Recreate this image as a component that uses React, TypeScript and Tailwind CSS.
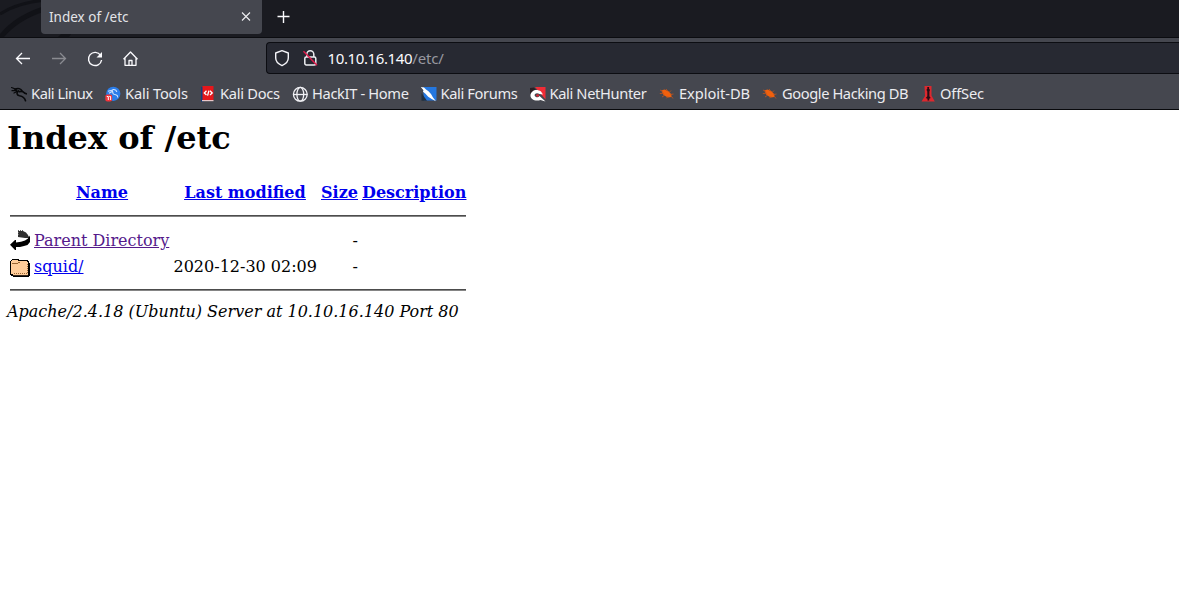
import React from "react";

const Dragon = () => (
  <svg width="16" height="16" viewBox="0 0 16 16" fill="none" stroke="#08090b" strokeLinecap="round">
    <path d="M.5 1.500 5 3.300M1 4.600 6 4.300M3 7 6 5.500" strokeWidth="1.200" />
    <path d="M4 3.200c3-1.200 6-.6 7 1.600" strokeWidth="1.600" />
    <path d="M7.500 4.800c-2.600 1.800-1.600 4.400 1 5 2.500.5 5 1.300 6 5" strokeWidth="1.600" />
    <path d="M8.200 5.700c2-.6 4-.3 5.300 1.300l1.800.8" strokeWidth="1.600" />
  </svg>
);

const Tools = () => (
  <svg width="16" height="16" viewBox="0 0 16 16" fill="none">
    <circle cx="8.300" cy="7.800" r="7.100" fill="#2b7de9" />
    <path d="M3 5.200 8 4M4 7.300 8 5M7.500 3.600c2.800-.4 4 1 4.300 2.400M8 5.500c-1 2.400 1 2.800 2.800 3.200s2 1.500 2 2.800" stroke="#cfe3ff" strokeWidth="1.100" />
    <rect x="0.300" y="8.500" width="6.800" height="7" rx="2" fill="#f3343b" />
    <path d="M1.800 10.500h1.500v3.500M4.300 10.500h1.300v3.500" stroke="#fff" />
  </svg>
);

const Docs = () => (
  <svg width="16" height="16" viewBox="0 0 16 16" fill="none">
    <path d="M1 1h3v14.500H1z" fill="#123e80" />
    <path d="M2.500 0H13.500v14H2.500z" fill="#e5171b" />
    <path d="M2 14h11.500v1.200H2z" fill="#e9c6c8" />
    <path d="M6.500 4.800 4.300 7l2.200 2m3.500-4.200L12.200 7 10 9M8.900 4.600l-1.300 5" stroke="#fff" strokeWidth="1.300" />
  </svg>
);

const Globe = () => (
  <svg width="16" height="16" viewBox="0 0 16 16" fill="none" stroke="#f1f1f5" strokeWidth="1.300">
    <circle cx="8.300" cy="8.300" r="6.900" />
    <ellipse cx="8.300" cy="8.300" rx="3.400" ry="6.900" />
    <path d="M1.600 8.500h13.800" />
  </svg>
);

const Forums = () => (
  <svg width="16" height="16" viewBox="0 0 16 16">
    <path d="M2 1h13.500v13.500H3z" fill="#2477df" />
    <path d="M.5 7 6 14.800H.5z" fill="#22303f" />
    <path d="m-.5 .8 3.500.7 2 2 2.500 1.700L10 8l2 3.500 3 3.800-4.300-2.200-3.500-2.300L4.500 7.700 2 5.800l.5-1.600z" fill="#fff" />
  </svg>
);

const NetHunter = () => (
  <svg width="16" height="16" viewBox="0 0 16 16">
    <path d="M5 1h10.500v12.500z" fill="#f12c36" />
    <path d="M0 2 4 1.500 6 4 0 8z" fill="#2b2024" />
    <path d="M.5 9C1 4.500 6.500 2.200 11 5.500l2 3L9.500 8C7 6.300 4 7.500 4.700 9.800c1 1.900 3.500 2 4.800.2l6 5.500-5-1.500C5.500 15.600 0 13.500.5 9z" fill="#fff" />
    <path d="M6 9.300c.8-1.500 2.800-1 3.300.2C8.500 11.200 6.200 11 6 9.300z" fill="#d82532" />
  </svg>
);

const Bug = () => (
  <svg width="16" height="16" viewBox="0 0 16 16">
    <path d="M2.300 4.600 5.500 3.600l4 1.700 3 3.200-.2 2.500-3.500.4L4.500 9z" fill="#f1600d" />
    <path d="m1 4 3 1.500M.8 7.500l4-.3M3 11l3-2M7 3l2 2.500M10.500 6l1.500-1.500M11.500 8.500l3-.5M7.500 12.300l1.500-2M12 10l2 2.500" stroke="#b85320" strokeWidth=".9" />
  </svg>
);

const OffSec = () => (
  <svg width="16" height="16" viewBox="0 0 16 16">
    <path d="M4.500 0h7v9.500l3.300 6H1.500L5 10z" fill="#dd282e" />
    <path d="M7.300 1h1.800v2l1 .8-.7 1.700v4.700l1.300 1.800-1.500.8v1.800H7.500v-1.800L5.800 12l1.500-1.800V5.500l-.9-1.700.9-.8z" fill="#250d14" />
  </svg>
);

const bookmarks = [
  { label: "Kali Linux", Icon: Dragon, item: "w-[94px] tracking-[-0.43px]" },
  { label: "Kali Tools", Icon: Tools, item: "w-[95px] tracking-[-0.15px]" },
  { label: "Kali Docs", Icon: Docs, item: "w-[92px] tracking-[-0.27px]" },
  { label: "HackIT - Home", Icon: Globe, item: "w-[128.500px] tracking-[-0.35px]" },
  { label: "Kali Forums", Icon: Forums, item: "w-[109px] tracking-[-0.36px]" },
  { label: "Kali NetHunter", Icon: NetHunter, item: "w-[129.500px] tracking-[-0.36px]" },
  { label: "Exploit-DB", Icon: Bug, item: "w-[103px] tracking-[-0.05px]" },
  { label: "Google Hacking DB", Icon: Bug, item: "w-[158px] tracking-[-0.41px]" },
  { label: "OffSec", Icon: OffSec, item: "w-[80px] tracking-[-0.15px]" },
];

function TabStrip() {
  return (
    <div className="relative flex h-[38px] items-start border-b border-[#0b0c10] bg-[#1a1b21]">
      <svg className="absolute left-0 top-0" width="120" height="37" fill="none" stroke="#111217">
        <path d="M0 14C12 6 25 2 45 0" strokeWidth="3" />
        <path d="M0 38C10 25 25 15 44 9" strokeWidth="5" />
        <path d="M56 39 63 32h9l-4 7z" fill="#111217" stroke="none" />
      </svg>
      <div className="relative ml-[41px] flex h-[34px] w-[221px] items-center rounded-b-[4px] bg-[#45474f] pl-2 pr-[11px] text-[#e3e4e8]">
        <span className="flex-1 text-[13.5px] leading-5">Index of /etc</span>
        <svg width="10" height="10" viewBox="0 0 10 10" stroke="#eeeef2" strokeWidth="1.100"><path d="m1 .5 8 8M9 .5l-8 8" /></svg>
      </div>
      <svg className="ml-[15px] mt-[10px]" width="14" height="14" stroke="#fbfbfe" strokeWidth="1.400"><path d="M6.500 1v12M.5 6.500h12" /></svg>
    </div>
  );
}

function Toolbar() {
  return (
    <div className="flex h-10 items-center bg-[#45474f] pl-[14px] text-[#fbfbfe]">
      <div className="flex w-[252px] gap-[18px] pt-px">
        <svg width="18" height="18" viewBox="0 0 18 18" fill="none" stroke="currentColor" strokeWidth="1.300"><path d="M16 8.500H2.500M8 3 2.500 8.500 8 14" /></svg>
        <svg width="18" height="18" viewBox="0 0 18 18" fill="none" stroke="#8a8b91" strokeWidth="1.300"><path d="M2 8.500h13.500M10 3l5.500 5.500L10 14" /></svg>
        <svg width="18" height="18" viewBox="0 0 18 18" fill="none" stroke="currentColor" strokeWidth="1.400"><path d="M14.600 5.300A6.600 6.600 0 1 0 15.600 10" /><path d="M16 2v5.500h-5.500z" fill="currentColor" stroke="none" /></svg>
        <svg width="18" height="18" viewBox="0 0 18 18" fill="none" stroke="currentColor" strokeWidth="1.300"><path d="M1.500 9.200 8.500 2l7 7.200M3 8v7.300h11V8M7 15v-4.500h3V15" strokeLinejoin="round" /></svg>
      </div>
      <div className="flex h-8 flex-1 items-center rounded-l-[4px] border border-r-0 border-[#0c0d12] bg-[#272932] pl-[7px]">
        <svg width="16" height="18" viewBox="0 0 16 18" fill="none" stroke="#f4f4f8" strokeWidth="1.400"><path d="M8 1.600 14.300 4v5c0 3.200-2.700 6-6.300 7.600C4.400 15 1.700 12.200 1.700 9V4z" strokeLinejoin="round" /></svg>
        <svg className="ml-3" width="17" height="18" viewBox="0 0 17 18" fill="none" stroke="#eeeef2" strokeWidth="1.500"><path d="M4.800 8V5.200a3.500 3.500 0 0 1 7 0V8" /><rect x="2.800" y="8" width="11" height="8" rx="1.500" /><path d="m1.500 2.200 13.500 14" stroke="#e01b4c" strokeWidth="1.500" /></svg>
        <span className="ml-[8.500px] whitespace-nowrap text-[15px] tracking-[-0.38px] text-[#fbfbfe]">10.10.16.140<span className="tracking-[-0.15px] text-[#9898a0]">/etc/</span></span>
      </div>
    </div>
  );
}

function Bookmarks() {
  return (
    <div className="flex h-8 items-center overflow-hidden border-b border-[#08090c] bg-[#45474f] pl-[11px] pt-px text-[14.67px] leading-[22px] text-[#ececf0]">
      {bookmarks.map(({ label, Icon, item }) => (
        <div key={label} className={`flex shrink-0 items-center gap-1 whitespace-nowrap ${item}`}>
          <Icon />
          <span className="-mt-[2px]">{label}</span>
        </div>
      ))}
    </div>
  );
}

const BackIcon = () => (
  <svg width="20" height="23" viewBox="0 0 20 23">
    <path d="M8 2h5l3 1.500 2 2.500 1 3h-4l-7-1z" fill="#303030" />
    <path d="M8 1h1v1H8zM8 3h1v1H8zM8 5h1v1H8zM10 1h1v1h-1zM12 1h1v1h-1z" fill="#666" />
    <path d="M19 6.500 20 8v5l-2.500 3-3.500 1-4 1H6v3H5l-5-5.300L5 11h1v2.500l5-.8 4-1.200 3-2z" fill="#000" />
  </svg>
);

const FolderIcon = () => (
  <svg width="20" height="23" viewBox="0 0 20 23" shapeRendering="crispEdges">
    <path d="M2 4h7v1h9v1h1v2h1v13h-1v1H3v-1H1v-1H0V6h1V5h1z" fill="#000" />
    <path d="M2 5h6v1h9v1h1v13H3v-1H1V6h1z" fill="#ffcc99" />
    <path d="M2 8h6V7h2v1H8v1H2z" fill="#996633" />
    <path d="M17 9h1v1h-1zM17 11h1v1h-1zM17 13h1v1h-1zM17 15h1v1h-1zM17 17h1v1h-1zM4 18h1v1H4zM6 18h1v1H6zM8 18h1v1H8zM10 18h1v1h-1zM12 18h1v1h-1zM14 18h1v1h-1zM16 18h1v1h-1z" fill="#996633" />
    <path d="M3 20h15v1H3z" fill="#33241a" />
  </svg>
);

const columns = "grid grid-cols-[20px_136px_143px_37px_104px] gap-x-1";
const rule = "w-[456px] border-t border-b border-t-[#4c4c4c] border-b-[#858585]";

function Listing() {
  return (
    <main className="px-[10px] text-[16px] leading-[20px]" style={{ fontFamily: '"DejaVu Serif", serif' }}>
      <h1 className="-ml-[3px] pt-[9px] text-[32px] font-bold leading-[38px]">Index of /etc</h1>
      <div className={`${columns} mt-[26px] text-center font-bold text-[#0000ee] underline`}>
        <span />
        <a>Name</a>
        <a className="-ml-px whitespace-nowrap">Last modified</a>
        <a>Size</a>
        <a className="whitespace-nowrap">Description</a>
      </div>
      <div className={`${rule} mt-[12px]`} />
      <div className={`${columns} mt-[12px] h-[26px]`}>
        <BackIcon />
        <a className="mt-[2px] whitespace-nowrap text-[#551a8b] underline">Parent Directory</a>
        <span />
        <span className="mt-[2px] text-right">-</span>
      </div>
      <div className={`${columns} h-[26px]`}>
        <FolderIcon />
        <a className="mt-[2px] text-[#0000ee] underline">squid/</a>
        <span className="-ml-[0.5px] mt-[2px] whitespace-nowrap">2020-12-30 02:09</span>
        <span className="mt-[2px] text-right">-</span>
      </div>
      <div className={`${rule} mt-[8px]`} />
      <address className="-ml-[3px] mt-[11px] italic">Apache/2.4.18 (Ubuntu) Server at 10.10.16.140 Port 80</address>
    </main>
  );
}

export default function App() {
  return (
    <div className="h-[614px] w-[1179px] overflow-hidden bg-white text-black" style={{ fontFamily: '"Noto Sans", sans-serif' }}>
      <TabStrip />
      <Toolbar />
      <Bookmarks />
      <Listing />
    </div>
  );
}
